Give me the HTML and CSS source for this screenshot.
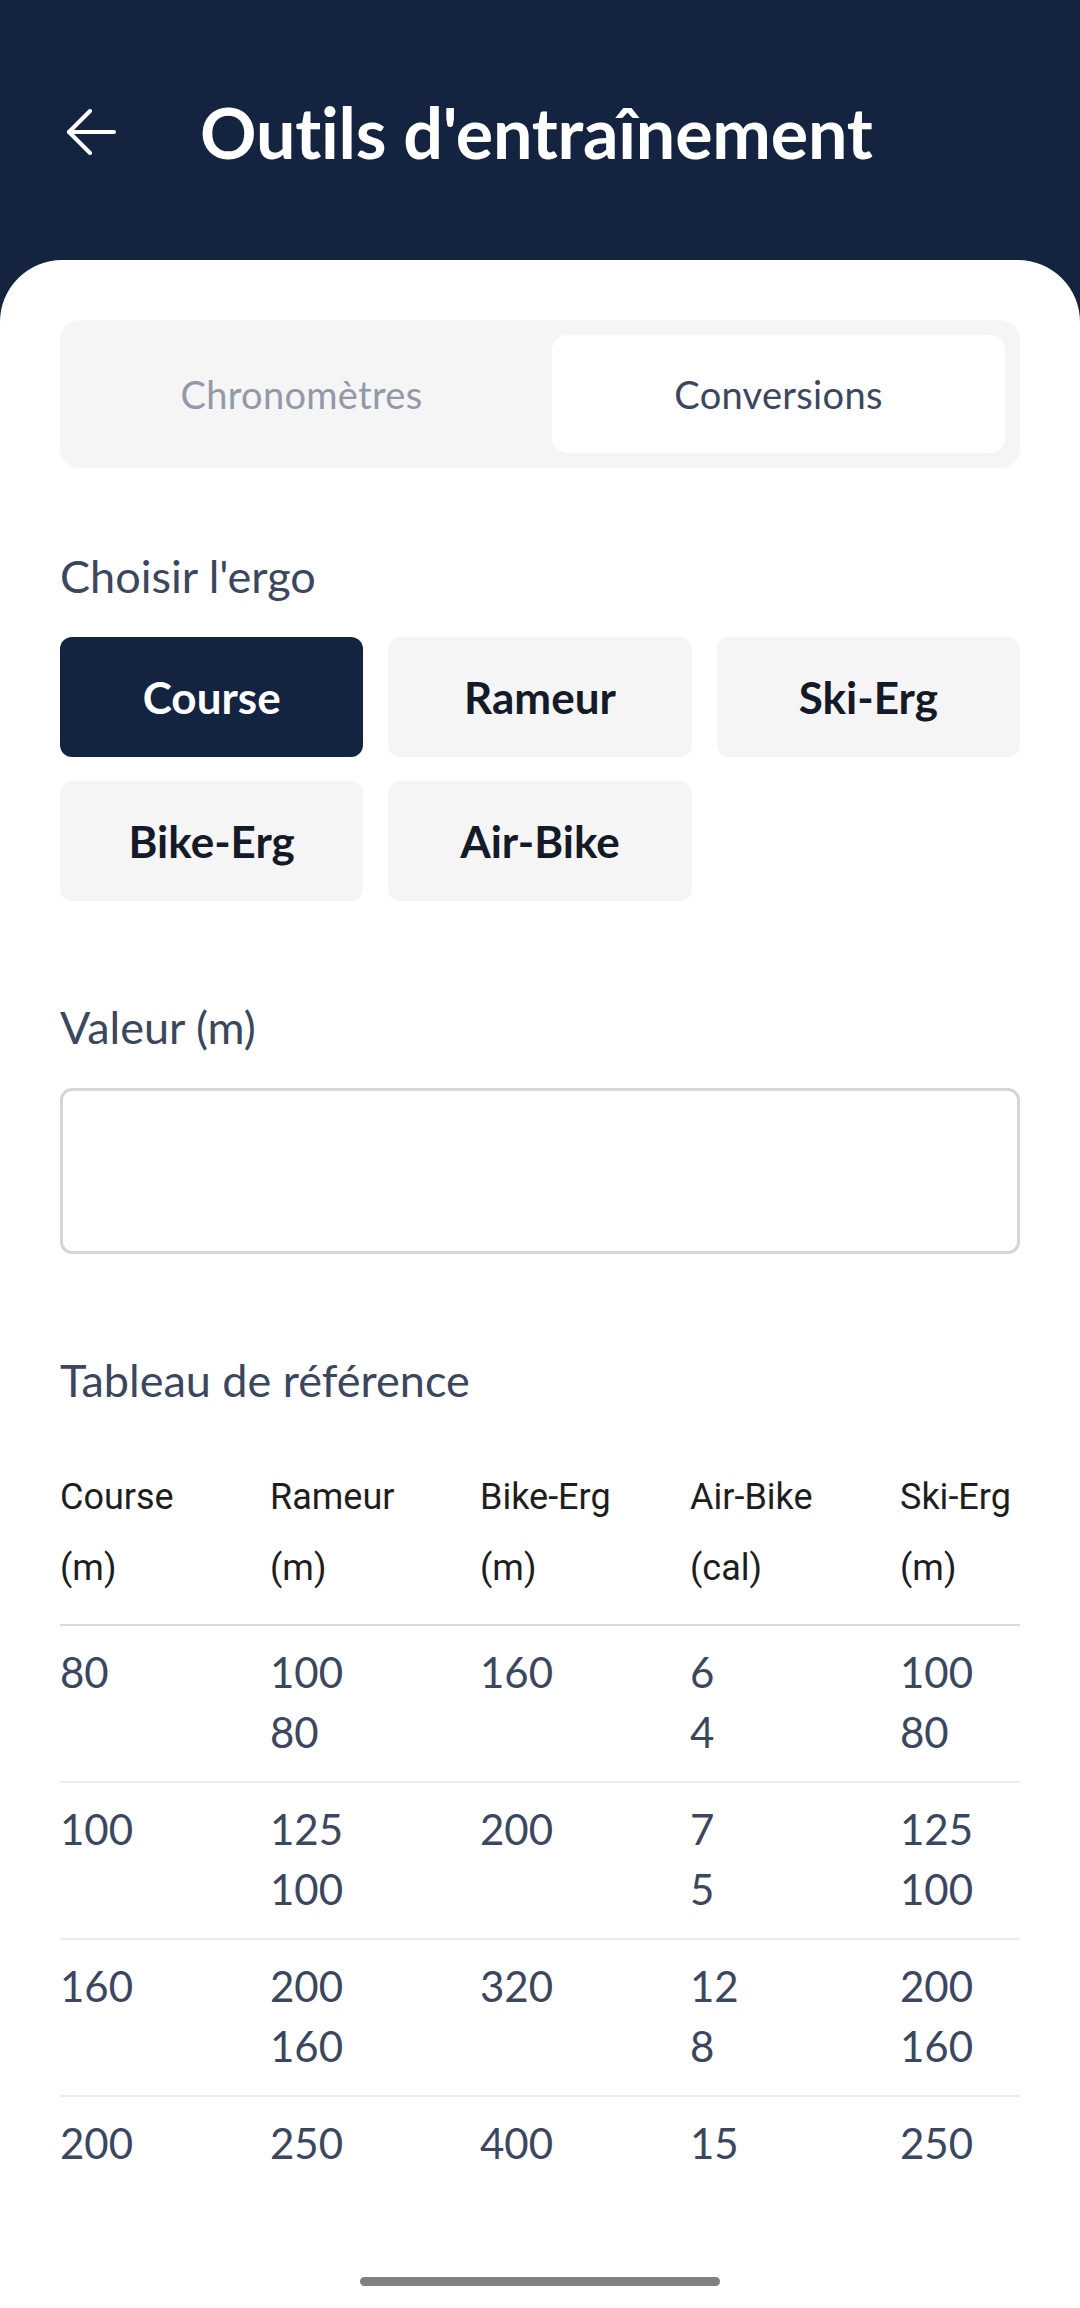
FILE: index.html
```html
<!doctype html>
<html lang="fr">
<head>
<meta charset="utf-8">
<title>Outils d'entraînement</title>
<link rel="stylesheet" href="styles.css">
</head>

<body>

<div class="screen">

  <!-- top bar -->
  <header class="topbar">
    <button class="back" aria-label="Retour">
      <svg width="50" height="46" viewBox="0 0 50 46" fill="none" stroke="#fff" stroke-width="4" stroke-linecap="round" stroke-linejoin="round">
        <path d="M48 23H3"/>
        <path d="M24 2L3 23l21 21"/>
      </svg>
    </button>
    <h1>Outils d'entraînement</h1>
  </header>

  <!-- white sheet -->
  <main class="sheet">
    <div class="scroll">

      <div class="tabs">
        <div class="tab">Chronomètres</div>
        <div class="tab active">Conversions</div>
      </div>

      <p class="label">Choisir l'ergo</p>
      <div class="ergo-grid">
        <button class="ergo active">Course</button>
        <button class="ergo">Rameur</button>
        <button class="ergo">Ski-Erg</button>
        <button class="ergo">Bike-Erg</button>
        <button class="ergo">Air-Bike</button>
      </div>

      <p class="label label-gap">Valeur (m)</p>
      <input class="value-input" type="text">

      <p class="label label-gap">Tableau de référence</p>
      <div class="ref-table">
        <div class="row head">
          <div>Course<br>(m)</div>
          <div>Rameur<br>(m)</div>
          <div>Bike-Erg<br>(m)</div>
          <div>Air-Bike<br>(cal)</div>
          <div>Ski-Erg<br>(m)</div>
        </div>
        <div class="row">
          <div>80</div>
          <div>100<br>80</div>
          <div>160</div>
          <div>6<br>4</div>
          <div>100<br>80</div>
        </div>
        <div class="row">
          <div>100</div>
          <div>125<br>100</div>
          <div>200</div>
          <div>7<br>5</div>
          <div>125<br>100</div>
        </div>
        <div class="row">
          <div>160</div>
          <div>200<br>160</div>
          <div>320</div>
          <div>12<br>8</div>
          <div>200<br>160</div>
        </div>
        <div class="row">
          <div>200</div>
          <div>250<br>200</div>
          <div>400</div>
          <div>15<br>10</div>
          <div>250<br>200</div>
        </div>
      </div>

    </div>

    <!-- gesture area -->
    <div class="gesture">
      <span class="home-bar"></span>
    </div>
  </main>

</div>

</body>
</html>
```

FILE: styles.css
```css
:root{
  --navy:   #14233f;   /* top bar + active chip */
  --slate:  #3b465f;   /* labels, values */
  --muted:  #9299a8;   /* inactive tab */
  --chip:   #f5f5f5;   /* tab track, inactive chips */
  --ink:    #141a28;   /* chip text */
  --line:   #d9d9d9;   /* header rule */
  --line-2: #ececec;   /* row rules */
}

* {
  box-sizing: border-box;
  margin: 0;
  padding: 0;
}
body {
  font-family: 'Lato', 'Noto Sans', sans-serif;
  background: #fff;
  width: 1080px;
}

.screen {
  height: 2308px;
  display: flex;
  flex-direction: column;
  background: var(--navy);
}

/* ── top bar ───────────────────────────────────────────────────── */
.topbar {
  height: 260px;
  flex-shrink: 0;
  display: flex;
  align-items: center;
  padding: 4px 0 0 66px;
  color: #fff;
}
.back {
  background: none;
  border: 0;
  width: 50px;
  height: 46px;
  display: flex;
  margin-right: 84px;
}
.topbar h1 {
  font-size: 70px;
  font-weight: 700;
  letter-spacing: -0.2px;
}

/* ── sheet ─────────────────────────────────────────────────────── */
.sheet {
  flex: 1;
  min-height: 0;
  display: flex;
  flex-direction: column;
  background: #fff;
  border-radius: 62px 62px 0 0;
}
.scroll {
  flex: 1;
  min-height: 0;
  overflow: hidden;
  padding: 60px 60px 0;
}

/* ── segmented tabs ────────────────────────────────────────────── */
.tabs {
  background: var(--chip);
  border-radius: 20px;
  padding: 15px;
  display: grid;
  grid-template-columns: 1fr 1fr;
  gap: 24px;
}
.tab {
  height: 118px;
  border-radius: 15px;
  display: flex;
  align-items: center;
  justify-content: center;
  font-size: 38px;
  color: var(--muted);
  letter-spacing: 0.3px;
}
.tab.active {
  background: #fff;
  color: var(--slate);
}

/* ── labels ────────────────────────────────────────────────────── */
.label {
  font-size: 45px;
  line-height: 60px;
  color: var(--slate);
  margin-top: 78px;
}
.label-gap {
  margin-top: 96px;
}

/* ── ergo chips ────────────────────────────────────────────────── */
.ergo-grid {
  display: grid;
  grid-template-columns: repeat(3, 1fr);
  gap: 24px 25px;
  margin-top: 31px;
}
.ergo {
  height: 120px;
  border: 0;
  border-radius: 12px;
  background: var(--chip);
  font-family: inherit;
  font-size: 44px;
  font-weight: 700;
  color: var(--ink);
}
.ergo.active {
  background: var(--navy);
  color: #fff;
}

/* ── value input ───────────────────────────────────────────────── */
.value-input {
  display: block;
  width: 100%;
  height: 166px;
  margin-top: 31px;
  border: 3px solid #d6d6d6;
  border-radius: 12px;
  background: #fff;
  font-family: inherit;
  font-size: 44px;
  padding: 0 30px;
  outline: none;
}

/* ── reference table ───────────────────────────────────────────── */
.ref-table {
  margin-top: 52px;
  overflow: hidden;
}
.row {
  width: 1050px;
  display: grid;
  grid-template-columns: repeat(5, 210px);
  padding: 16px 0 19px;
  border-bottom: 2px solid var(--line-2);
  font-size: 42px;
  line-height: 60px;
  color: var(--slate);
}
.row.head {
  padding: 0 0 20px;
  border-bottom-color: var(--line);
  font-family: 'Roboto', sans-serif;
  font-size: 36px;
  line-height: 71px;
  color: #1e1e1e;
}

/* ── gesture bar ───────────────────────────────────────────────── */
.gesture {
  height: 120px;
  flex-shrink: 0;
  display: flex;
  justify-content: center;
  padding-top: 89px;
}
.home-bar {
  width: 360px;
  height: 9px;
  border-radius: 5px;
  background: #808080;
}
```
